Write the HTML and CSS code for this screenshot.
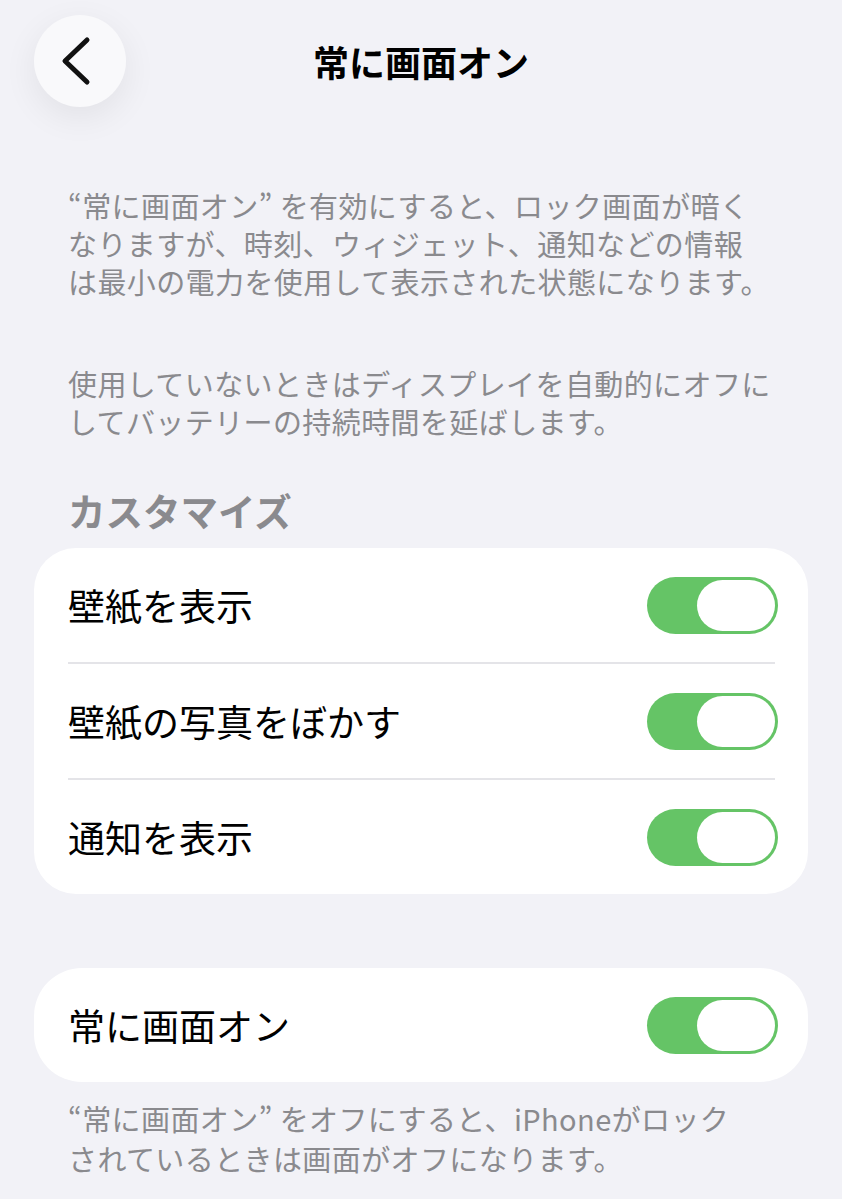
FILE: index.html
```html
<!DOCTYPE html>
<html lang="ja">
<head>
  <meta charset="UTF-8">
  <meta name="viewport" content="width=device-width, initial-scale=1.0">
  <title>常に画面オン</title>
  <link rel="stylesheet" href="styles.css">
</head>
<body>
  <header class="nav">
    <button class="back" type="button" aria-label="戻る">
      <svg width="92" height="92" viewBox="0 0 92 92">
        <path d="M53 25 L31 46 L53 67" fill="none" stroke="#111" stroke-width="5" stroke-linecap="round" stroke-linejoin="round"/>
      </svg>
    </button>
    <h1 class="title">常に画面オン</h1>
    <span></span>
  </header>

  <p class="desc first">“常に画面オン” を有効にすると、ロック画面が暗く<br>なりますが、時刻、ウィジェット、通知などの情報<br>は最小の電力を使用して表示された状態になります。</p>
  <p class="desc second">使用していないときはディスプレイを自動的にオフに<br>してバッテリーの持続時間を延ばします。</p>

  <h2 class="section-title">カスタマイズ</h2>
  <div class="card">
    <div class="row">
      <span class="label">壁紙を表示</span>
      <span class="switch"><span class="knob"></span></span>
    </div>
    <div class="sep"></div>
    <div class="row">
      <span class="label">壁紙の写真をぼかす</span>
      <span class="switch"><span class="knob"></span></span>
    </div>
    <div class="sep"></div>
    <div class="row">
      <span class="label">通知を表示</span>
      <span class="switch"><span class="knob"></span></span>
    </div>
  </div>

  <div class="card single">
    <div class="row">
      <span class="label">常に画面オン</span>
      <span class="switch"><span class="knob"></span></span>
    </div>
  </div>
  <p class="desc footer">“常に画面オン” をオフにすると、iPhoneがロック<br>されているときは画面がオフになります。</p>
</body>
</html>
```

FILE: styles.css
```css
/* iOS settings look */
body {
  margin: 0;
  background: #f2f2f7;
  font-family: "Noto Sans CJK JP", "Noto Sans", sans-serif;
  color: #000;
}
.nav {
  display: grid;
  grid-template-columns: 92px 1fr 92px;
  align-items: center;
  padding: 15px 34px 0;
  height: 92px;
}
.back {
  width: 92px;
  height: 92px;
  padding: 0;
  border: none;
  border-radius: 50%;
  background: #f9f9fb;
  box-shadow: 0 10px 34px rgba(0, 0, 0, 0.07);
}
.back svg {
  display: block;
}
.title {
  margin: 0;
  text-align: center;
  font-size: 36px;
  font-weight: 700;
  line-height: 44px;
}
.desc {
  margin: 0;
  padding-left: 68px;
  font-size: 29px;
  letter-spacing: 0.4px;
  line-height: 38px;
  color: #8a8a8e;
  white-space: nowrap;
}
.desc.first {
  margin-top: 79px;
}
.desc.second {
  margin-top: 64px;
}
.section-title {
  margin: 48px 0 16px;
  padding-left: 68px;
  font-size: 37.5px;
  line-height: 44px;
  font-weight: 700;
  color: #8a8a8e;
}
.card {
  margin: 0 34px;
  background: #fff;
  border-radius: 42px;
}
.card.single {
  margin-top: 74px;
  border-radius: 48px;
}
.row {
  display: flex;
  align-items: center;
  justify-content: space-between;
  height: 114px;
  padding: 0 30px 0 34px;
}
.label {
  font-size: 37px;
  line-height: 44px;
}
.sep {
  height: 2px;
  margin: 0 33px 0 34px;
  background: #e4e4e8;
}
.switch {
  display: flex;
  justify-content: flex-end;
  box-sizing: border-box;
  width: 131px;
  height: 57px;
  padding: 3px;
  border-radius: 29px;
  background: #65c466;
}
.knob {
  width: 78px;
  height: 51px;
  border-radius: 26px;
  background: #fff;
}
.desc.footer {
  margin-top: 16px;
  line-height: 40px;
}
```
